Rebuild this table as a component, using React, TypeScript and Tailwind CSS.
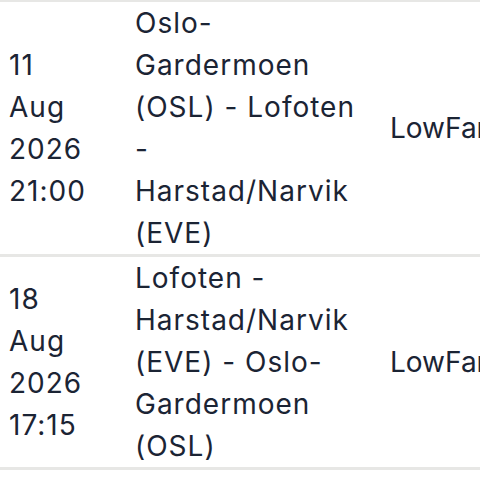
import React from "react";

type Trip = { date: string[]; route: string; fare: string };

const trips: Trip[] = [
  { date: ["11", "Aug", "2026", "21:00"], route: "Oslo-Gardermoen (OSL) - Lofoten - Harstad/Narvik (EVE)", fare: "LowFare" },
  { date: ["18", "Aug", "2026", "17:15"], route: "Lofoten - Harstad/Narvik (EVE) - Oslo-Gardermoen (OSL)", fare: "LowFare" },
  { date: ["25", "Aug", "2026", "09:40"], route: "Oslo-Gardermoen (OSL) - Tromsø (TOS)", fare: "LowFare" },
];

const App = () => {
  return (
    <div className="h-[480px] w-[480px] overflow-hidden bg-white" style={{ fontFamily: "Inter, 'Noto Sans', sans-serif" }}>
      <div className="w-[640px] border-t-2 border-[#e7e7e5] text-[28px] leading-[42px] tracking-[1px] text-[#1b2434]">
        {trips.map((t, i) => (
          <div key={i} className="flex items-center border-b-[3px] border-[#e7e7e5]">
            <div className="w-[126px] shrink-0 pl-[9px]">
              {t.date.map((d) => (
                <div key={d}>{d}</div>
              ))}
            </div>
            <div className="w-[255px] shrink-0 pl-[9px] pr-[26px]">{t.route}</div>
            <div className="flex-1 px-[9px] tracking-normal">{t.fare}</div>
          </div>
        ))}
      </div>
    </div>
  );
};

export default App;
